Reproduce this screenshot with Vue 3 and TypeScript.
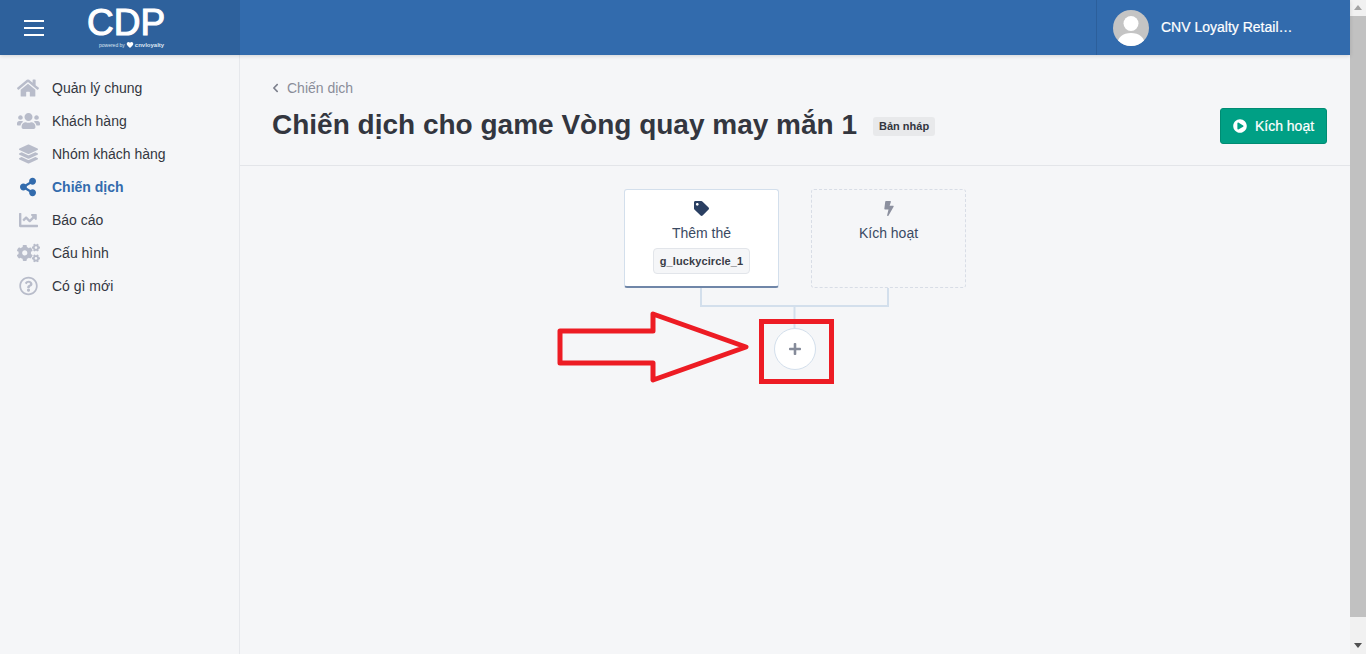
<template>
  <div class="window">
    <div class="page">
      <!-- thanh trên -->
      <header class="topbar">
        <div class="brand">
          <button class="burger" aria-label="menu"><span></span><span></span><span></span></button>
          <div class="logo">
            <div class="logo-name">CDP</div>
            <div class="logo-sub">
              powered by
              <svg viewBox="0 0 512 512" class="logo-heart"><path d="M256 448l-30-28C118 322 48 258 48 180c0-64 50-112 112-112 36 0 70 16 96 44 26-28 60-44 96-44 62 0 112 48 112 112 0 78-70 142-178 240z" /></svg>
              <b>cnvloyalty</b>
            </div>
          </div>
        </div>
        <div class="account">
          <div class="avatar">
            <svg viewBox="0 0 36 36">
              <circle cx="18" cy="13.5" r="7.5" fill="#fff" />
              <path d="M4 36c0-9 6-13 14-13s14 4 14 13z" fill="#fff" />
            </svg>
          </div>
          <span class="account-name">CNV Loyalty Retail…</span>
        </div>
      </header>

      <div class="body">
        <!-- menu trái -->
        <aside class="sidebar">
          <a v-for="item in menu" :key="item.label" class="menu-item" :class="{ active: item.active }">
            <span class="menu-icon">
              <svg :viewBox="item.box" :style="{ width: item.w + 'px' }"><path :d="item.d" /></svg>
            </span>
            {{ item.label }}
          </a>
        </aside>

        <main class="main">
          <section class="head">
            <div class="head-left">
              <div class="crumb">
                <svg viewBox="0 0 320 512" class="crumb-icon"><path :d="icons.chevron" /></svg>
                Chiến dịch
              </div>
              <div class="title-row">
                <h1>Chiến dịch cho game Vòng quay may mắn 1</h1>
                <span class="badge">Bản nháp</span>
              </div>
            </div>
            <button class="activate">
              <svg viewBox="0 0 512 512"><path :d="icons.play" /></svg>
              Kích hoạt
            </button>
          </section>

          <section class="canvas">
            <div class="cards">
              <div class="card filled">
                <svg viewBox="0 0 512 512" class="card-icon tag"><path :d="icons.tag" /></svg>
                <div class="card-title">Thêm thẻ</div>
                <span class="chip">g_luckycircle_1</span>
              </div>
              <div class="card empty">
                <svg viewBox="0 0 320 512" class="card-icon bolt"><path :d="icons.bolt" /></svg>
                <div class="card-title">Kích hoạt</div>
              </div>
            </div>

            <svg class="links" width="189" height="40" viewBox="0 0 189 40">
              <path d="M1 0V18H188V0M94.5 18V40" fill="none" stroke="#d3dfec" stroke-width="2" />
            </svg>

            <button class="add" aria-label="add">
              <svg viewBox="0 0 448 512"><path :d="icons.plus" /></svg>
            </button>

            <!-- mũi tên chú thích màu đỏ -->
            <svg class="note" width="290" height="80" viewBox="0 0 290 80">
              <path d="M4 20H97V3L190 36 97 69V52H4z" fill="none" stroke="#ed1c24" stroke-width="5" stroke-linejoin="round" />
              <rect x="205.5" y="10.5" width="70" height="60" fill="none" stroke="#ed1c24" stroke-width="5" />
            </svg>
          </section>
        </main>
      </div>
    </div>

    <!-- thanh cuộn -->
    <div class="scrollbar">
      <i class="arrow up"></i>
      <div class="thumb"></div>
      <i class="arrow down"></i>
    </div>
  </div>
</template>

<script setup lang="ts">
const icons = {
  chevron: 'M34.52 239.03L228.87 44.69c9.37-9.37 24.57-9.37 33.94 0l22.67 22.67c9.36 9.36 9.37 24.52.04 33.9L131.49 256l154.02 154.75c9.34 9.38 9.32 24.54-.04 33.9l-22.67 22.67c-9.37 9.37-24.57 9.37-33.94 0L34.52 272.97c-9.37-9.37-9.37-24.57 0-33.94z',
  play: 'M256 8C119 8 8 119 8 256s111 248 248 248 248-111 248-248S393 8 256 8zm115.7 272l-176 101c-15.8 8.8-35.7-2.5-35.7-21V152c0-18.4 19.8-29.8 35.7-21l176 107c16.4 9.2 16.4 32.9 0 42z',
  tag: 'M0 252.118V48C0 21.49 21.49 0 48 0h204.118a48 48 0 0 1 33.941 14.059l211.882 211.882c18.745 18.745 18.745 49.137 0 67.882L293.823 497.941c-18.745 18.745-49.137 18.745-67.882 0L14.059 286.059A48 48 0 0 1 0 252.118zM112 64c-26.51 0-48 21.49-48 48s21.49 48 48 48 48-21.49 48-48-21.49-48-48-48z',
  bolt: 'M296 160H180.6l42.6-129.8C227.2 15 215.7 0 200 0H56C44 0 33.8 8.9 32.2 20.8l-32 240C-1.7 275.2 9.5 288 24 288h118.7L96.6 482.5c-3.6 15.2 8 29.5 23.3 29.5 8.4 0 16.4-4.4 20.8-12l176-304c9.3-15.9-2.2-36-20.7-36z',
  plus: 'M416 208H272V64c0-17.67-14.33-32-32-32h-32c-17.67 0-32 14.33-32 32v144H32c-17.67 0-32 14.33-32 32v32c0 17.67 14.33 32 32 32h144v144c0 17.67 14.33 32 32 32h32c17.67 0 32-14.33 32-32V304h144c17.67 0 32-14.33 32-32v-32c0-17.67-14.33-32-32-32z'
}

interface MenuItem {
  label: string
  box: string
  w: number
  d: string
  active?: boolean
}

const menu: MenuItem[] = [
  {
    label: 'Quản lý chung',
    box: '0 0 576 512',
    w: 22,
    d: 'M280.37 148.26L96 300.11V464a16 16 0 0 0 16 16l112.06-.29a16 16 0 0 0 15.92-16V368a16 16 0 0 1 16-16h64a16 16 0 0 1 16 16v95.64a16 16 0 0 0 16 16.05L464 480a16 16 0 0 0 16-16V300L295.67 148.26a12.19 12.19 0 0 0-15.3 0zM571.6 251.47L488 182.56V44.05a12 12 0 0 0-12-12h-56a12 12 0 0 0-12 12v72.61L318.47 43a48 48 0 0 0-61 0L4.34 251.47a12 12 0 0 0-1.6 16.9l25.5 31A12 12 0 0 0 45.15 301l235.22-193.74a12.19 12.19 0 0 1 15.3 0L530.9 301a12 12 0 0 0 16.9-1.6l25.5-31a12 12 0 0 0-1.7-16.93z'
  },
  {
    label: 'Khách hàng',
    box: '0 0 640 512',
    w: 23,
    d: 'M96 224c35.3 0 64-28.7 64-64s-28.7-64-64-64-64 28.7-64 64 28.7 64 64 64zm448 0c35.3 0 64-28.7 64-64s-28.7-64-64-64-64 28.7-64 64 28.7 64 64 64zm32 32h-64c-17.6 0-33.5 7.1-45.1 18.6 40.3 22.1 68.9 62 75.1 109.4h66c17.7 0 32-14.3 32-32v-32c0-35.3-28.7-64-64-64zm-256 0c61.9 0 112-50.1 112-112S381.9 32 320 32 208 82.1 208 144s50.1 112 112 112zm76.8 32h-8.3c-20.8 10-43.9 16-68.5 16s-47.6-6-68.5-16h-8.3C179.6 288 128 339.6 128 403.2V432c0 26.5 21.5 48 48 48h288c26.5 0 48-21.5 48-48v-28.8c0-63.6-51.6-115.2-115.2-115.2zm-223.7-13.4C161.5 263.1 145.6 256 128 256H64c-35.3 0-64 28.7-64 64v32c0 17.7 14.3 32 32 32h65.9c6.3-47.4 34.9-87.3 75.2-109.4z'
  },
  {
    label: 'Nhóm khách hàng',
    box: '0 0 512 512',
    w: 19,
    d: 'M12.41 148.02l232.94 105.67c6.8 3.09 14.49 3.09 21.29 0l232.94-105.67c16.55-7.51 16.55-32.52 0-40.03L266.65 2.31a25.607 25.607 0 0 0-21.29 0L12.41 107.98c-16.55 7.51-16.55 32.53 0 40.04zm487.18 88.28l-58.09-26.33-161.64 73.27c-7.56 3.43-15.59 5.17-23.86 5.17s-16.29-1.74-23.86-5.17L70.51 209.97l-58.1 26.33c-16.55 7.5-16.55 32.5 0 40l232.94 105.59c6.8 3.08 14.49 3.08 21.29 0L499.59 276.3c16.55-7.5 16.55-32.5 0-40zm0 127.8l-57.87-26.23-161.86 73.37c-7.56 3.43-15.59 5.17-23.86 5.17s-16.29-1.74-23.86-5.17L70.29 337.87 12.41 364.1c-16.55 7.5-16.55 32.5 0 40l232.94 105.59c6.8 3.08 14.49 3.08 21.29 0L499.59 404.1c16.55-7.5 16.55-32.5 0-40z'
  },
  {
    label: 'Chiến dịch',
    box: '0 0 448 512',
    w: 16,
    active: true,
    d: 'M352 320c-22.608 0-43.387 7.819-59.79 20.895l-102.486-64.054a96.551 96.551 0 0 0 0-41.683l102.486-64.054C308.613 184.181 329.392 192 352 192c53.019 0 96-42.981 96-96S405.019 0 352 0s-96 42.981-96 96c0 7.158.79 14.13 2.276 20.841L155.79 180.895C139.387 167.819 118.608 160 96 160c-53.019 0-96 42.981-96 96s42.981 96 96 96c22.608 0 43.387-7.819 59.79-20.895l102.486 64.054A96.301 96.301 0 0 0 256 416c0 53.019 42.981 96 96 96s96-42.981 96-96-42.981-96-96-96z'
  },
  {
    label: 'Báo cáo',
    box: '0 0 512 512',
    w: 19,
    d: 'M496 384H64V80c0-8.84-7.16-16-16-16H16C7.16 64 0 71.16 0 80v336c0 17.67 14.33 32 32 32h464c8.84 0 16-7.16 16-16v-32c0-8.84-7.16-16-16-16zM464 96H345.94c-21.38 0-32.09 25.85-16.97 40.97l32.4 32.4L288 242.75l-73.37-73.37c-12.5-12.5-32.76-12.5-45.25 0l-68.69 68.69c-6.25 6.25-6.25 16.38 0 22.63l22.62 22.62c6.25 6.25 16.38 6.25 22.63 0L192 237.25l73.37 73.37c12.5 12.5 32.76 12.5 45.25 0l96-96 32.4 32.4c15.12 15.12 40.97 4.41 40.97-16.97V112c.01-8.84-7.15-16-15.99-16z'
  },
  {
    label: 'Cấu hình',
    box: '0 0 640 512',
    w: 23,
    d: 'M512.1 191l-8.2 14.3c-3 5.3-9.4 7.5-15.1 5.4-11.8-4.4-22.6-10.7-32.1-18.6-4.6-3.8-5.8-10.5-2.8-15.7l8.2-14.3c-6.9-8-12.3-17.3-15.9-27.4h-16.5c-6 0-11.2-4.3-12.2-10.3-2-12-2.1-24.6 0-37.1 1-6 6.2-10.4 12.2-10.4h16.5c3.6-10.1 9-19.4 15.9-27.4l-8.2-14.3c-3-5.2-1.9-11.9 2.8-15.7 9.5-7.9 20.4-14.2 32.1-18.6 5.7-2.1 12.1.1 15.1 5.4l8.2 14.3c10.5-1.9 21.2-1.9 31.7 0L552 6.3c3-5.3 9.4-7.5 15.1-5.4 11.8 4.4 22.6 10.7 32.1 18.6 4.6 3.8 5.8 10.5 2.8 15.7l-8.2 14.3c6.9 8 12.3 17.3 15.9 27.4h16.5c6 0 11.2 4.3 12.2 10.3 2 12 2.1 24.6 0 37.1-1 6-6.2 10.4-12.2 10.4h-16.5c-3.6 10.1-9 19.4-15.9 27.4l8.2 14.3c3 5.2 1.9 11.9-2.8 15.7-9.5 7.9-20.4 14.2-32.1 18.6-5.7 2.1-12.1-.1-15.1-5.4l-8.2-14.3c-10.4 1.9-21.2 1.9-31.7 0zm-10.5-58.8c38.5 29.6 82.4-14.3 52.8-52.8-38.5-29.7-82.4 14.3-52.8 52.8zM386.3 286.1l33.7 16.8c10.1 5.8 14.5 18.1 10.5 29.1-8.9 24.2-26.4 46.4-42.6 65.8-7.4 8.9-20.2 11.1-30.3 5.3l-29.1-16.8c-16 13.7-34.6 24.6-54.9 31.7v33.6c0 11.6-8.3 21.6-19.7 23.6-24.6 4.2-50.4 4.4-75.9 0-11.5-2-20-11.9-20-23.6V418c-20.3-7.2-38.9-18-54.9-31.7L74 403c-10 5.8-22.9 3.6-30.3-5.3-16.2-19.4-33.3-41.6-42.2-65.7-4-10.9.4-23.2 10.5-29.1l33.3-16.8c-3.9-20.9-3.9-42.4 0-63.4L12 205.8c-10.1-5.8-14.6-18.1-10.5-29 8.9-24.2 26-46.4 42.2-65.8 7.4-8.9 20.2-11.1 30.3-5.3l29.1 16.8c16-13.7 34.6-24.6 54.9-31.7V57.1c0-11.5 8.2-21.5 19.6-23.5 24.6-4.2 50.5-4.4 76-.1 11.5 2 20 11.9 20 23.6v33.6c20.3 7.2 38.9 18 54.9 31.7l29.1-16.8c10-5.8 22.9-3.6 30.3 5.3 16.2 19.4 33.2 41.6 42.1 65.8 4 10.9.1 23.2-10 29.1l-33.7 16.8c3.9 21 3.9 42.5 0 63.5zm-117.6 21.1c59.2-77-28.7-164.9-105.7-105.7-59.2 77 28.7 164.9 105.7 105.7zm243.4 182.7l-8.2 14.3c-3 5.3-9.4 7.5-15.1 5.4-11.8-4.4-22.6-10.7-32.1-18.6-4.6-3.8-5.8-10.5-2.8-15.7l8.2-14.3c-6.9-8-12.3-17.3-15.9-27.4h-16.5c-6 0-11.2-4.3-12.2-10.3-2-12-2.1-24.6 0-37.1 1-6 6.2-10.4 12.2-10.4h16.5c3.6-10.1 9-19.4 15.9-27.4l-8.2-14.3c-3-5.2-1.9-11.9 2.8-15.7 9.5-7.9 20.4-14.2 32.1-18.6 5.7-2.1 12.1.1 15.1 5.4l8.2 14.3c10.5-1.9 21.2-1.9 31.7 0l8.2-14.3c3-5.3 9.4-7.5 15.1-5.4 11.8 4.4 22.6 10.7 32.1 18.6 4.6 3.8 5.8 10.5 2.8 15.7l-8.2 14.3c6.9 8 12.3 17.3 15.9 27.4h16.5c6 0 11.2 4.3 12.2 10.3 2 12 2.1 24.6 0 37.1-1 6-6.2 10.4-12.2 10.4h-16.5c-3.6 10.1-9 19.4-15.9 27.4l8.2 14.3c3 5.2 1.9 11.9-2.8 15.7-9.5 7.9-20.4 14.2-32.1 18.6-5.7 2.1-12.1-.1-15.1-5.4l-8.2-14.3c-10.4 1.9-21.2 1.9-31.7 0zM501.6 431c38.5 29.6 82.4-14.3 52.8-52.8-38.5-29.6-82.4 14.3-52.8 52.8z'
  },
  {
    label: 'Có gì mới',
    box: '0 0 512 512',
    w: 19,
    d: 'M256 8C119.043 8 8 119.083 8 256c0 136.997 111.043 248 248 248s248-111.003 248-248C504 119.083 392.957 8 256 8zm0 448c-110.532 0-200-89.431-200-200 0-110.495 89.472-200 200-200 110.491 0 200 89.471 200 200 0 110.53-89.431 200-200 200zm107.244-255.2c0 67.052-72.421 68.084-72.421 92.863V300c0 6.627-5.373 12-12 12h-45.647c-6.627 0-12-5.373-12-12v-8.659c0-35.745 27.1-50.034 47.579-61.516 17.561-9.845 28.324-16.541 28.324-29.579 0-17.246-21.999-28.693-39.784-28.693-23.189 0-33.894 10.977-48.942 29.969-4.057 5.12-11.46 6.071-16.666 2.124l-27.824-21.098c-5.107-3.872-6.251-11.066-2.644-16.363C184.846 131.491 214.94 112 261.794 112c49.071 0 101.45 38.304 101.45 88.8zM298 368c0 23.159-18.841 42-42 42s-42-18.841-42-42 18.841-42 42-42 42 18.841 42 42z'
  }
]
</script>

<style>
html,
body {
  margin: 0;
  overflow: hidden;
}
</style>

<style scoped>
.window {
  display: flex;
  width: 1366px;
  height: 654px;
  overflow: hidden;
  background: #f5f6f8;
  font-family: "Liberation Sans", Arial, sans-serif;
  color: #33363f;
}

.page {
  flex: 1;
  min-width: 0;
  display: flex;
  flex-direction: column;
}

/* top bar */
.topbar {
  height: 55px;
  flex: none;
  display: flex;
  justify-content: space-between;
  background: #326bad;
  box-shadow: 0 1px 4px rgba(0, 0, 0, 0.14);
  position: relative;
  z-index: 2;
}

.brand {
  width: 240px;
  display: flex;
  background: #2e619c;
}

.burger {
  width: 88px;
  flex: none;
  padding: 0 0 0 24px;
  border: 0;
  background: none;
  display: flex;
  flex-direction: column;
  justify-content: center;
  gap: 5px;
}

.burger span {
  display: block;
  width: 20px;
  height: 2px;
  background: #fff;
}

.logo {
  color: #fff;
  padding-top: 4px;
}

.logo-name {
  font-size: 37px;
  line-height: 37px;
  font-weight: 400;
  -webkit-text-stroke: 1.1px #fff;
  margin-left: -1px;
}

.logo-sub {
  display: flex;
  align-items: center;
  gap: 1px;
  font-size: 5px;
  line-height: 8px;
  margin: 0 0 0 11px;
  white-space: nowrap;
  color: #dbe5f1;
}

.logo-sub b {
  font-size: 6px;
}

.logo-heart {
  width: 8px;
  height: 8px;
  fill: #fff;
}

.account {
  width: 254px;
  box-sizing: border-box;
  border-left: 1px solid #2c5f9b;
  padding-left: 16px;
  display: flex;
  align-items: center;
  gap: 12px;
}

.avatar {
  width: 36px;
  height: 36px;
  border-radius: 50%;
  overflow: hidden;
  background: #c4c4c4;
  flex: none;
}

.avatar svg {
  display: block;
}

.account-name {
  white-space: nowrap;
  color: #fff;
  font-size: 14px;
  -webkit-text-stroke: 0.2px #fff;
  padding-bottom: 2px;
}

/* sidebar */
.body {
  flex: 1;
  min-height: 0;
  display: flex;
}

.sidebar {
  width: 240px;
  flex: none;
  box-sizing: border-box;
  border-right: 1px solid #e6e8ec;
  padding-top: 16px;
}

.menu-item {
  height: 33px;
  display: flex;
  align-items: center;
  font-size: 14px;
  color: #33363f;
}

.menu-item.active {
  color: #326bad;
  font-weight: 700;
}

.menu-icon {
  width: 52px;
  flex: none;
  padding-left: 14px;
  box-sizing: border-box;
  padding-right: 10px;
  display: flex;
  justify-content: center;
}

.menu-icon svg {
  display: block;
  height: 20px;
  fill: #b8bcca;
  flex: none;
}

.menu-item.active .menu-icon svg {
  fill: #326bad;
}

/* main */
.main {
  flex: 1;
  min-width: 0;
  display: flex;
  flex-direction: column;
}

.head {
  height: 111px;
  flex: none;
  box-sizing: border-box;
  border-bottom: 1px solid #e3e5e9;
  padding: 0 23px 0 32px;
  display: flex;
  justify-content: space-between;
  align-items: flex-start;
}

.crumb {
  margin-top: 25px;
  font-size: 14px;
  line-height: 16px;
  color: #8a8d99;
  display: flex;
  align-items: center;
  gap: 8px;
}

.crumb-icon {
  width: 7px;
  height: 10px;
  fill: #7c7f8c;
}

.title-row {
  display: flex;
  align-items: center;
  margin-top: 11px;
}

h1 {
  margin: 0;
  font-size: 28px;
  line-height: 36px;
  font-weight: 700;
  color: #33363f;
}

.badge {
  margin-left: 16px;
  padding: 0 6px;
  height: 19px;
  line-height: 19px;
  border-radius: 3px;
  background: #e8e9eb;
  font-size: 11px;
  font-weight: 700;
  color: #33363f;
  margin-top: 3px;
}

.activate {
  margin-top: 53px;
  width: 107px;
  height: 36px;
  box-sizing: border-box;
  border: 1px solid #008c73;
  border-radius: 3px;
  background: #00a085;
  color: #fff;
  font-family: inherit;
  font-size: 14px;
  -webkit-text-stroke: 0.2px #fff;
  display: flex;
  align-items: center;
  justify-content: center;
  gap: 8px;
  padding: 0;
}

.activate svg {
  width: 14px;
  height: 14px;
  fill: #fff;
}

/* canvas */
.canvas {
  position: relative;
  flex: 1;
  display: flex;
  flex-direction: column;
  align-items: center;
  padding-top: 23px;
}

.cards {
  display: flex;
  gap: 32px;
}

.card {
  width: 155px;
  height: 99px;
  box-sizing: border-box;
  border-radius: 3px;
  padding-top: 11px;
  display: flex;
  flex-direction: column;
  align-items: center;
  font-size: 14px;
  color: #3a4a63;
}

.card.filled {
  background: #fff;
  border: 1px solid #d3dfec;
  border-bottom: 2px solid #6f86a8;
}

.card.empty {
  border: 1px dashed #d8dde6;
}

.card-icon {
  height: 15px;
  display: block;
}

.card-icon.tag {
  width: 15px;
  fill: #2a3f62;
}

.card-icon.bolt {
  width: 10px;
  fill: #8c909f;
}

.card-title {
  margin-top: 9px;
  line-height: 17px;
}

.chip {
  margin-top: 6px;
  height: 26px;
  box-sizing: border-box;
  padding: 0 6px;
  line-height: 24px;
  border: 1px solid #e2e5ea;
  border-radius: 4px;
  background: #f5f6f8;
  font-size: 11px;
  font-weight: 700;
  color: #3a3d47;
  letter-spacing: 0.1px;
}

.links {
  display: block;
  margin-left: -1px;
  margin-top: 0;
}

.add {
  width: 42px;
  height: 42px;
  padding: 0;
  border: 1px solid #d3dfec;
  border-radius: 50%;
  background: #fff;
  display: flex;
  align-items: center;
  justify-content: center;
}

.add svg {
  width: 12px;
  height: 14px;
  fill: #858b9a;
}

.note {
  position: absolute;
  left: 316px;
  top: 145px;
  overflow: visible;
}

/* scrollbar */
.scrollbar {
  width: 16px;
  flex: none;
  background: #f1f1f1;
  display: flex;
  flex-direction: column;
  align-items: center;
}

.arrow {
  flex: none;
  width: 0;
  height: 0;
  border-left: 4px solid transparent;
  border-right: 4px solid transparent;
  margin: 5px 0 6px;
}

.arrow.up {
  border-bottom: 5px solid #a3a3a3;
}

.arrow.down {
  border-top: 5px solid #505050;
}

.thumb {
  width: 100%;
  flex: 1;
  background: #c1c1c1;
  margin-bottom: 21px;
}
</style>
